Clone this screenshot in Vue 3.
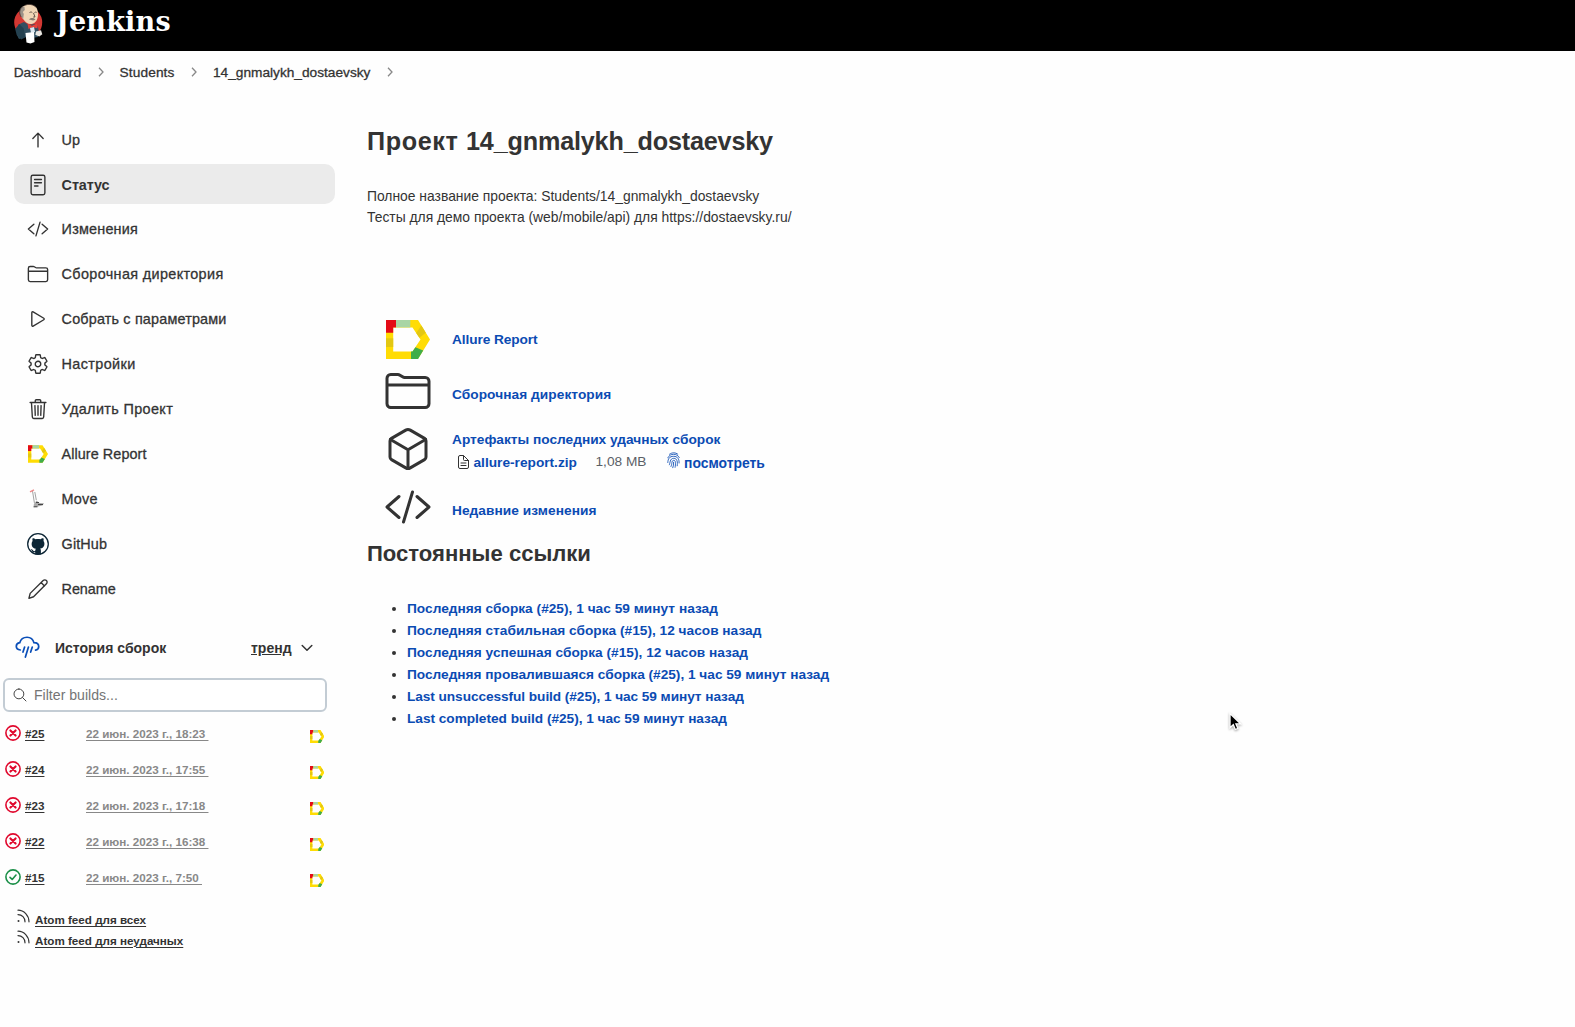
<script setup>
import { h } from 'vue'

const crumbs = [
  { text: 'Dashboard', track: 0.05 },
  { text: 'Students', track: 0.1 },
  { text: '14_gnmalykh_dostaevsky', track: 0 },
]

const tasks = [
  { icon: 'up', text: 'Up', track: 0 },
  { icon: 'status', text: 'Статус', track: -0.1, active: true },
  { icon: 'code', text: 'Изменения', track: 0.2 },
  { icon: 'folder', text: 'Сборочная директория', track: 0.36 },
  { icon: 'play', text: 'Собрать с параметрами', track: 0.17 },
  { icon: 'gear', text: 'Настройки', track: 0.38 },
  { icon: 'trash', text: 'Удалить Проект', track: 0.37 },
  { icon: 'allure', text: 'Allure Report', track: 0.07 },
  { icon: 'move', text: 'Move', track: 0.2 },
  { icon: 'github', text: 'GitHub', track: 0.12 },
  { icon: 'pencil', text: 'Rename', track: -0.07 },
]

const builds = [
  { id: '#25', date: '22 июн. 2023 г., 18:23\u00a0', ok: false },
  { id: '#24', date: '22 июн. 2023 г., 17:55\u00a0', ok: false },
  { id: '#23', date: '22 июн. 2023 г., 17:18\u00a0', ok: false },
  { id: '#22', date: '22 июн. 2023 г., 16:38\u00a0', ok: false },
  { id: '#15', date: '22 июн. 2023 г., 7:50\u00a0', ok: true },
]

const feeds = ['Atom feed для всех', 'Atom feed для неудачных']

const permalinks = [
  { text: 'Последняя сборка (#25), 1 час 59 минут назад', track: 0.02 },
  { text: 'Последняя стабильная сборка (#15), 12 часов назад', track: 0.01 },
  { text: 'Последняя успешная сборка (#15), 12 часов назад', track: 0.02 },
  { text: 'Последняя провалившаяся сборка (#25), 1 час 59 минут назад', track: -0.01 },
  { text: 'Last unsuccessful build (#25), 1 час 59 минут назад', track: -0.07 },
  { text: 'Last completed build (#25), 1 час 59 минут назад', track: -0.03 },
]

// Outline icons on a 512 grid
const outlines = {
  up: ['M136 220l120-124 120 124M256 104v312'],
  status: ['M136 30h240a40 40 0 0 1 40 40v372a40 40 0 0 1-40 40H136a40 40 0 0 1-40-40V70a40 40 0 0 1 40-40z', 'M176 128h160M176 204h160M176 280h80'],
  code: ['M160 368L32 256l128-112M352 368l128-112-128-112M304 96l-96 320'],
  folder: ['M440 432H72a40 40 0 01-40-40V120a40 40 0 0140-40h75.89a40 40 0 0122.19 6.72l27.84 18.56a40 40 0 0022.19 6.72H440a40 40 0 0140 40v240a40 40 0 01-40 40zM32 192h448'],
  play: ['M112 111v290c0 17.44 17 28.52 31 20.16l247.9-148.37c12.12-7.25 12.12-26.33 0-33.58L143 90.84c-14-8.36-31 2.72-31 20.16z'],
  gear: [
    'M262.29 192.31a64 64 0 1057.4 57.4 64.13 64.13 0 00-57.4-57.4z',
    'M416.39 256a154.34 154.34 0 01-1.53 20.79l45.21 35.46a10.81 10.81 0 012.45 13.75l-42.77 74a10.81 10.81 0 01-13.14 4.59l-44.9-18.08a16.11 16.11 0 00-15.17 1.75A164.48 164.48 0 01325 400.8a15.94 15.94 0 00-8.82 12.14l-6.73 47.89a11.08 11.08 0 01-10.68 9.17h-85.54a11.11 11.11 0 01-10.69-8.87l-6.72-47.82a16.07 16.07 0 00-9-12.22 155.3 155.3 0 01-21.46-12.57 16 16 0 00-15.11-1.71l-44.89 18.07a10.81 10.81 0 01-13.14-4.58l-42.77-74a10.8 10.8 0 012.45-13.75l38.21-30a16.05 16.05 0 006-14.08c-.36-4.17-.58-8.33-.58-12.5s.21-8.27.58-12.35a16 16 0 00-6.07-13.94l-38.19-30A10.81 10.81 0 0149.48 186l42.77-74a10.81 10.81 0 0113.14-4.59l44.9 18.08a16.11 16.11 0 0015.17-1.75A164.48 164.48 0 01187 111.2a15.94 15.94 0 008.82-12.14l6.73-47.89A11.08 11.08 0 01213.23 42h85.54a11.11 11.11 0 0110.69 8.87l6.72 47.82a16.07 16.07 0 009 12.22 155.3 155.3 0 0121.46 12.57 16 16 0 0015.11 1.71l44.89-18.07a10.81 10.81 0 0113.14 4.58l42.77 74a10.8 10.8 0 01-2.45 13.75l-38.21 30a16.05 16.05 0 00-6.05 14.08c.33 4.14.55 8.3.55 12.47z',
  ],
  trash: ['M104 106l20 338c1 18 14 32 32 32h200c18 0 31-14 32-32l20-338M72 106h368M192 106V64a24 24 0 0124-24h80a24 24 0 0124 24v42M256 176v228M184 176l8 228M328 176l-8 228'],
  pencil: ['M74 358L376 58c22-22 56-20 76 0s22 54 0 76L152 436 44 474zM328 104l78 80'],
  cube: ['M448 341.37V170.61A32 32 0 00432.11 143l-152-88.46a47.94 47.94 0 00-48.24 0L79.89 143A32 32 0 0064 170.61v170.76A32 32 0 0079.89 369l152 88.46a48 48 0 0048.24 0l152-88.46A32 32 0 00448 341.37z', 'M69 153.99l187 110 187-110M256 463.99v-200'],
  doc: ['M416 221.25V416a48 48 0 01-48 48H144a48 48 0 01-48-48V96a48 48 0 0148-48h98.75a32 32 0 0122.62 9.37l141.26 141.26a32 32 0 019.37 22.62z', 'M256 56v120a32 32 0 0032 32h120M176 288h160M176 368h160'],
  search: ['M221.09 64a157.09 157.09 0 10157.09 157.09A157.1 157.1 0 00221.09 64z', 'M338.29 338.29L448 448'],
}

const Outline = (props) =>
  h('svg', {
    viewBox: '0 0 512 512', fill: 'none', stroke: 'currentColor',
    'stroke-width': 32, 'stroke-linecap': 'round', 'stroke-linejoin': 'round',
  }, outlines[props.name].map((d) => h('path', { d })))
Outline.props = ['name']

const allureParts = [
  ['#ffdc04', 'M0 0H32L44 19.5 32 39H0zM7.2 7.4V31.6H26.5L34.5 19.5 26.5 7.4z'],
  ['#e40b17', 'M0 0H10V7.4H7.2V12.7H0z'],
  ['#a8d5a5', 'M10 0H24.3V7.4H10z'],
  ['#e3c713', 'M0 18.3H7.2V27H0zM30.2 12.9L35.4 5.6 39.8 12.7 33.4 17.8z'],
  ['#40ad49', 'M25 31.6H26.5L29.4 27.2 37.2 30.5 32 39H25z'],
]
const Allure = () =>
  h('svg', { viewBox: '0 0 44 39' }, allureParts.map(([fill, d]) => h('path', { d, fill, 'fill-rule': 'evenodd' })))
</script>

<template>
  <div class="page">
    <header class="top">
      <svg class="butler" viewBox="0 0 30 41">
        <ellipse cx="14.2" cy="19.5" rx="14" ry="14.8" fill="#d33833" />
        <path d="M4.500 21.500l5.500-2.500 5 3 6-1 3 3 1 5-1 5-6 1-9-1-4 2-2-4z" fill="#335061" />
        <path d="M1.200 26l4-5 4.500 4.500 1.500 9-4 2-4.500-4.500z" fill="#244150" />
        <path d="M6.500 9C6.500 4 10.500 1.500 15.500 1.500c5.500 0 8.500 3.500 8.500 9.500 0 5-2 8.800-5.500 9.800-4 .8-7-1-9-4.300-2-1.500-3-4.500-3-7.500z" fill="#f0d6b7" />
        <path d="M9 3.300C5.800 5 4.800 9 6.800 13l2.400 3 .6-5-1-2 2-2-.3-3z" fill="#9b9288" />
        <path d="M9 3.300C5.200 6 4.800 10 7.200 14M10 2.800c4-2.500 10-1.500 12.500 2M15.500 9.500c1-.6 2-.6 2.800 0M20.500 9.500c.8-.5 1.500-.5 2.200 0M19.500 10l1.500 4h-1.800" fill="none" stroke="#44352f" stroke-width=".8" />
        <path d="M15 16.500c2-2 5-1.800 6.500.2l-2.500.8z" fill="#857a70" />
        <path d="M13.500 20.800l4.500 2 5-2.200.5 4.600-5-1-4 1.700z" fill="#e5403a" />
        <path d="M16 25l4-1 1 5-4 1z" fill="#dce6ee" />
        <path d="M11.500 30l8.500-1 .5 10-4 1.500-4-1z" fill="#fff" />
        <path d="M22 28.500l5-1.200 1.300 4-3 2.200-4-1.800z" fill="#e9e6e1" />
      </svg>
      <span class="brand">Jenkins</span>
    </header>

    <nav class="crumbs">
      <template v-for="c in crumbs" :key="c.text">
        <span class="crumb" :style="{ letterSpacing: c.track + 'px' }">{{ c.text }}</span>
        <svg class="sep" viewBox="0 0 6 10"><path d="M1 .8L5 5 1 9.200" /></svg>
      </template>
    </nav>

    <div class="body">
      <aside class="side">
        <ul class="tasks">
          <li v-for="t in tasks" :key="t.text" :class="['task', { active: t.active }]">
            <span class="glyph">
              <Allure v-if="t.icon === 'allure'" class="allure-s" />
              <svg v-else-if="t.icon === 'move'" class="move" viewBox="0 0 22 22">
                <path d="M5.500 3l2 12.500M7.800 4l1.500 8" fill="none" stroke="#999" stroke-width=".9" />
                <path d="M3 3.800l4-2" stroke="#e88" stroke-width="1.300" />
                <path d="M6.500 17l3-4.500 3 2.500 4.500.3-1.500 2.200-8 1.800z" fill="#aaa" />
                <path d="M9 14.500h3M6.500 18.800h4M11 16.500h5" fill="none" stroke="#444" stroke-width="1" />
              </svg>
              <svg v-else-if="t.icon === 'github'" class="github" viewBox="0 0 22 22">
                <circle cx="11" cy="11" r="10.300" fill="#fff" stroke="#0d2636" stroke-width="1.300" />
                <path d="M5.600 5.200c1-.2 2.200.4 3 1 1.500-.4 3.300-.4 4.800 0 .8-.6 2-1.200 3-1 .4 1 .3 2 .1 2.700 1 1.200 1.200 3 .6 4.800-.6 1.700-2 2.500-3.900 2.800.5.500.7 1.200.7 2V21.500H8.200v-2.300c-2.300.4-3-.6-3.500-1.700-.3-.6-.8-.9-1-1.200 1.300-.3 1.900.4 2.400 1.200.5.700 1.200.9 2.100.6 0-.9.300-1.900.7-2.400-2-.3-3.500-1.200-4-3-.5-1.700-.3-3.500.7-4.700-.3-.8-.3-1.900 0-2.800z" fill="#0d2636" />
              </svg>
              <Outline v-else :name="t.icon" class="task-icon" />
            </span>
            <span :style="{ letterSpacing: t.track + 'px' }">{{ t.text }}</span>
          </li>
        </ul>

        <div class="history">
          <svg class="rain" viewBox="0 0 26 24">
            <path d="M5.500 14.600C3 14.400 1.300 12.900 1.300 10.800c0-2 1.500-3.500 3.600-3.800C5.900 3.300 9 1.300 12.500 1.300c3.500 0 6.300 2.100 7.200 5.600 2.900.1 5 1.600 5 4 0 2-1.400 3.500-3.300 3.800M10 11.500l-1.700 5.300M14 11.500l-3.200 10.500M18 11.500l-1.700 5.300" />
          </svg>
          <span class="history-title">История сборок</span>
          <a class="trend">тренд</a>
          <svg class="down" viewBox="0 0 12 8"><path d="M1.200 1.500L6 6.300l4.800-4.800" /></svg>
        </div>

        <div class="filter">
          <Outline name="search" class="search" />
          <span>Filter builds...</span>
        </div>

        <div v-for="b in builds" :key="b.id" class="build">
          <svg :class="['ball', b.ok ? 'ok' : 'bad']" viewBox="0 0 16 16">
            <circle cx="8" cy="8" r="7.100" />
            <path v-if="b.ok" d="M5 8.400l2.200 2L11 6" />
            <path v-else class="x" d="M5.400 5.400l5.200 5.200M10.600 5.400l-5.200 5.200" />
          </svg>
          <a class="num">{{ b.id }}</a>
          <a class="date">{{ b.date }}</a>
          <Allure class="allure-xs" />
        </div>

        <div class="feeds">
          <div v-for="f in feeds" :key="f" class="feed">
            <svg class="atom" viewBox="0 0 13 14"><path d="M1 1.200C7 1.200 12 6.500 12 12.800M1 5.600c4 0 7 3.200 7 7.200" /><circle cx="1.500" cy="12" r="1" /></svg>
            <a>{{ f }}</a>
          </div>
        </div>
      </aside>

      <main class="main">
        <h1><span class="kind">Проект </span>14_gnmalykh_dostaevsky</h1>
        <div class="desc">
          <div>Полное название проекта: Students/14_gnmalykh_dostaevsky</div>
          <div>Тесты для демо проекта (web/mobile/api) для https://dostaevsky.ru/</div>
        </div>

        <div class="row first">
          <span class="big"><Allure class="allure-l" /></span>
          <a class="t-allure">Allure Report</a>
        </div>
        <div class="row folder">
          <span class="big"><Outline name="folder" class="big-icon" /></span>
          <a class="t-ws">Сборочная директория</a>
        </div>
        <div class="row artifacts">
          <span class="big"><Outline name="cube" class="big-icon" /></span>
          <div>
            <a class="t-art">Артефакты последних удачных сборок</a>
            <div class="file">
              <Outline name="doc" class="doc" />
              <a class="zip">allure-report.zip</a>
              <span class="size">1,08 MB</span>
              <svg class="finger" viewBox="0 0 13 17">
                <path d="M2.500 2.200C5 .3 8.500.3 10.800 2.200M.8 5.800C2.200 3.200 4.300 2.300 6.600 2.300s4.500 1 5.700 3.300M.8 10.500C1 7 2.200 4.300 6.600 4.300c4 0 5.700 2.800 5.500 6.700M2.400 12.800c.8-1.500.3-6.500 4.300-6.500 3.700 0 4 4 3.500 7.500M4 14.500c1.300-2.300.3-6.200 2.700-6.200 2.300 0 1.900 3.700 1.400 7M6.600 10.300c.1 2-.2 3.700-.8 5.400" />
              </svg>
              <a class="look">посмотреть</a>
            </div>
          </div>
        </div>
        <div class="row changes">
          <span class="big"><Outline name="code" class="big-icon" /></span>
          <a class="t-ws">Недавние изменения</a>
        </div>

        <h2>Постоянные ссылки</h2>
        <ul class="links">
          <li v-for="p in permalinks" :key="p.text"><a :style="{ letterSpacing: p.track + 'px' }">{{ p.text }}</a></li>
        </ul>
      </main>
    </div>

    <svg class="cursor" viewBox="0 0 14 20">
      <path d="M2 1.500v14.300l3.300-3.100 2 4.800 2.600-1.100-2-4.600h4.600z" fill="#000" stroke="#fff" stroke-width="1.300" />
    </svg>
  </div>
</template>

<style>
body { margin: 0; background: #fefefe; }
</style>

<style scoped>
.page {
  position: relative;
  height: 1027px;
  overflow: hidden;
  background: #fefefe;
  color: #333;
  font-family: "Liberation Sans", Arial, sans-serif;
  white-space: nowrap;
}
svg { display: block; flex: none; }
ul { list-style: none; margin: 0; padding: 0; }
h1, h2 { margin: 0; }
a { text-decoration: none; }

.top { height: 51px; background: #000; display: flex; align-items: flex-start; }
.butler { width: 30px; height: 41px; margin: 2.5px 0 0 14px; }
.brand {
  margin: 6px 0 0 12px;
  font: bold 27px/31px "DejaVu Serif", serif;
  letter-spacing: .2px;
  color: #fff;
}

.crumbs { height: 43px; padding-left: 13.7px; display: flex; align-items: center; font-size: 13.7px; }
.crumb { -webkit-text-stroke: .3px #333; }
.sep { width: 6px; height: 10px; margin: 0 16px 1px 16.5px; fill: none; stroke: #888; stroke-width: 1.3; }

.body { display: flex; }
.side { width: 366px; box-sizing: border-box; flex: none; padding-top: 25px; }
.tasks { padding-left: 14px; }
.task {
  width: 321px; height: 40px; margin-bottom: 4.9px;
  box-sizing: border-box; padding: 1.4px 0 0 13px;
  display: flex; align-items: center;
  border-radius: 10px;
  font-size: 14.4px; line-height: 20px;
  -webkit-text-stroke: .3px #333;
}
.task.active { background: #ebebeb; font-weight: bold; -webkit-text-stroke: 0; }
.glyph { width: 22px; margin-right: 12.6px; display: flex; justify-content: center; }
.task-icon { width: 22px; height: 22px; }
.allure-s { width: 20px; height: 18px; }
.move, .github { width: 22px; height: 22px; }

.history { height: 30px; margin-top: 25px; padding-left: 14.5px; display: flex; align-items: center; font-size: 14px; font-weight: bold; }
.rain { width: 25px; height: 23px; fill: none; stroke: #0b4fb8; stroke-width: 1.8; stroke-linecap: round; }
.history-title { width: 196px; margin-left: 15.5px; }
.trend { text-decoration: underline; text-underline-offset: 1px; }
.down { width: 12px; height: 8px; margin-left: 9.5px; fill: none; stroke: #333; stroke-width: 1.5; stroke-linecap: round; stroke-linejoin: round; }

.filter {
  width: 324px; height: 34px; box-sizing: border-box; margin: 15px 0 4px 3px; padding-left: 7px;
  border: 2px solid #c3ccd4; border-radius: 6px; background: #fff;
  display: flex; align-items: center;
  font-size: 14.1px; color: #757575;
}
.search { width: 16px; height: 16px; margin-right: 6px; color: #444; }

.build { height: 36px; padding-left: 5px; display: flex; align-items: center; font-size: 11.67px; font-weight: bold; }
.build a, .feed a { text-decoration: underline; text-underline-offset: 1.5px; text-decoration-thickness: 1px; }
.ball { width: 16px; height: 16px; margin: 0 4px 2px 0; fill: none; stroke-width: 1.6; stroke-linecap: round; stroke-linejoin: round; }
.ball.bad { stroke: #e0082d; }
.ball .x { stroke-width: 2.1; }
.ball.ok { stroke: #1b8f48; }
.num { width: 19.5px; color: #333; }
.date { margin-left: 41.5px; color: #888; }
.allure-xs { width: 14.5px; height: 13px; margin: 6px 42px 0 auto; }

.feeds { margin-top: 13px; }
.feed { height: 21px; padding-left: 16.5px; display: flex; align-items: center; font-size: 11.65px; font-weight: bold; }
.atom { width: 13px; height: 14px; margin: 0 5.5px 6px 0; fill: none; stroke: #333; stroke-width: 1.2; stroke-linecap: round; }
.atom circle { fill: #333; stroke: none; }

.main { width: 600px; padding-left: 1px; }
h1 { height: 30px; line-height: 30px; margin-top: 32px; font-size: 25.2px; letter-spacing: -.18px; }
.kind { letter-spacing: .6px; }
.desc { margin-top: 29.7px; font-size: 13.87px; line-height: 21px; }
.row { height: 54px; margin-left: -1px; display: flex; align-items: center; font-size: 13.7px; line-height: 20px; font-weight: bold; }
.row a, .links a { color: #0b4bb3; }
.first { margin-top: 84.3px; }
.big { width: 46px; margin: 0 20px 0 18px; padding-left: 2px; display: flex; }
.allure-l { width: 44px; height: 39px; margin-top: 1px; }
.big-icon { width: 48px; height: 48px; margin-left: -2px; }
.t-allure { letter-spacing: -.1px; padding-top: 2px; }
.t-ws { letter-spacing: .06px; }
.folder .big { padding-bottom: 4px; }
.folder .t-ws { padding-top: 5px; }
.artifacts { height: 60px; }
.artifacts .big { padding-bottom: 2px; }
.t-art { display: block; line-height: 23.5px; font-size: 13.69px; padding-top: 3px; }
.file { display: flex; align-items: center; height: 23.5px; }
.doc { width: 17px; height: 16px; margin: 0 2px 3px 2.5px; color: #333; }
.zip { width: 122px; }
.size { width: 71px; font-weight: normal; color: #5b5f66; padding-bottom: 2px; font-size: 13.69px; }
.finger { width: 13px; height: 17px; margin: 0 4.5px 5px 0; fill: none; stroke: #0b4bb3; stroke-width: .85; stroke-linecap: round; }
.look { font-size: 13.92px; }
.changes .t-ws { padding-top: 8px; }
h2 { height: 39px; line-height: 39px; font-size: 22.08px; }
.links { margin-top: 24.6px; padding-left: 24.5px; }
.links li { height: 22px; display: flex; align-items: center; font-size: 13.68px; font-weight: bold; }
.links li::before { content: ""; width: 4.5px; height: 4.5px; border-radius: 50%; background: #333; margin: 1px 11px 0 0; }

.cursor { position: absolute; left: 1228px; top: 712px; width: 14px; height: 20px; filter: drop-shadow(0 1px 1px rgba(0, 0, 0, .35)); }
</style>
